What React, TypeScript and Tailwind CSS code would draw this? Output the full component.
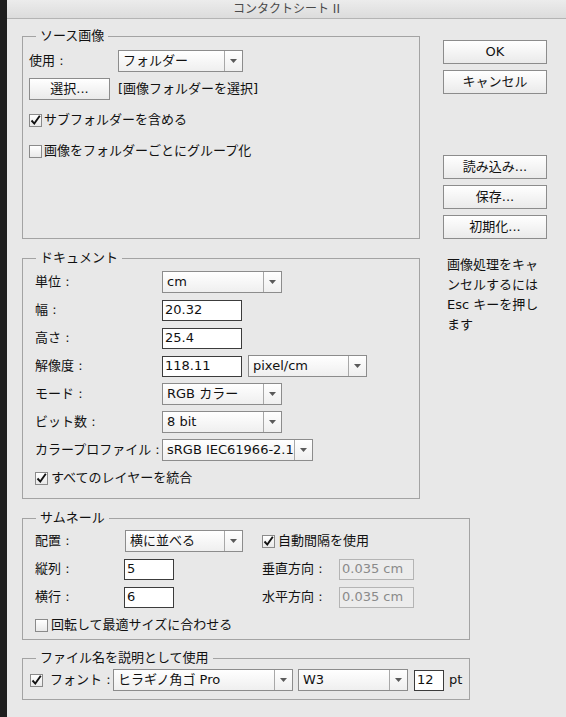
import type { ReactNode } from 'react';

const FONT = '"DejaVu Sans", "Noto Sans CJK JP", sans-serif';

function Arrow() {
  return (
    <svg width="7" height="4" viewBox="0 0 7 4" className="block">
      <path d="M0 0 L7 0 L3.5 4 Z" fill="#5a5a5a" />
    </svg>
  );
}

function Select({ w, text }: { w: string; text: string }) {
  return (
    <div className={`${w} h-[22px] flex border border-[#8c8c8c] bg-gradient-to-b from-white to-[#efefef] shrink-0`}>
      <div className="flex-1 flex items-center pl-[4px] overflow-hidden whitespace-nowrap text-[13px] text-[#111]">{text}</div>
      <div className="w-[18px] border-l border-[#a8a8a8] flex items-center justify-center">
        <Arrow />
      </div>
    </div>
  );
}

function Field({ w, text, disabled }: { w: string; text: string; disabled?: boolean }) {
  return (
    <div
      className={`${w} h-[21px] flex items-center pl-[2px] text-[13px] shrink-0 border ${
        disabled ? 'border-[#b4b4b4] bg-[#ececec] text-[#8a8a8a]' : 'border-[#3c3c3c] bg-white text-[#111]'
      }`}
    >
      {text}
    </div>
  );
}

function Btn({ w = 'w-[104px]', h = 'h-[24px]', children }: { w?: string; h?: string; children: ReactNode }) {
  return (
    <div className={`${w} ${h} flex items-center justify-center border border-[#8c8c8c] bg-gradient-to-b from-white to-[#eaeaea] text-[13px] text-[#111] shrink-0`}>
      {children}
    </div>
  );
}

function Box({ checked }: { checked?: boolean }) {
  return (
    <div className="w-[13px] h-[13px] border border-[#8a8a8a] bg-gradient-to-b from-white to-[#e9e9e9] flex items-center justify-center shrink-0">
      {checked && (
        <svg width="11" height="11" viewBox="0 0 11 11" className="block">
          <path d="M1.5 5.5 L4.3 8.6 L9.8 0.8" fill="none" stroke="#111" strokeWidth="1.9" />
        </svg>
      )}
    </div>
  );
}

function Check({ checked, label, gap = 'gap-[2px]' }: { checked?: boolean; label: string; gap?: string }) {
  return (
    <div className={`flex items-center ${gap} h-[16px] text-[13px] text-[#111] whitespace-nowrap`}>
      <Box checked={checked} />
      <span>{label}</span>
    </div>
  );
}

function Group({ title, cls, children }: { title: string; cls: string; children: ReactNode }) {
  return (
    <fieldset className={`${cls} border border-[#a3a3a3] box-border`}>
      <legend className="ml-[13px] px-[4px] text-[13px] leading-[18px] text-[#111]">{title}</legend>
      {children}
    </fieldset>
  );
}

function Row({ label, lw, children, mt = 'mt-[6px]' }: { label: string; lw: string; children?: ReactNode; mt?: string }) {
  return (
    <div className={`flex items-center h-[22px] ${mt}`}>
      <div className={`${lw} shrink-0 text-[13px] text-[#111] whitespace-nowrap`}>{label}</div>
      {children}
    </div>
  );
}

export default function App() {
  return (
    <div className="w-[566px] h-[717px] flex bg-[#1e1e1e] overflow-hidden" style={{ fontFamily: FONT }}>
      <div className="w-[7px] shrink-0" />
      <div className="flex-1 flex flex-col bg-[#e8e8e8]">
        {/* Title bar */}
        <div className="h-[19px] shrink-0 flex items-center justify-center bg-gradient-to-b from-[#ececec] to-[#dcdcdc] border-b border-[#b4b4b4] text-[12px] text-[#4a4a4a]">
          コンタクトシート II
        </div>

        <div className="pl-[15px] pt-[8px]">
          <div className="flex">
            <div className="w-[398px] flex flex-col">
              {/* Source */}
              <Group title="ソース画像" cls="h-[212px]">
                <div className="pl-[6px]">
                  <Row label="使用 :" lw="w-[89px]" mt="mt-[5px]">
                    <Select w="w-[125px]" text="フォルダー" />
                  </Row>
                  <div className="flex items-center mt-[6px]">
                    <Btn w="w-[81px]" h="h-[22px]">選択...</Btn>
                    <span className="ml-[8px] text-[13px] text-[#111]">[画像フォルダーを選択]</span>
                  </div>
                  <div className="mt-[12px]">
                    <Check checked label="サブフォルダーを含める" />
                  </div>
                  <div className="mt-[15px]">
                    <Check label="画像をフォルダーごとにグループ化" />
                  </div>
                </div>
              </Group>

              {/* Document */}
              <Group title="ドキュメント" cls="h-[250px] mt-[10px]">
                <div className="pl-[12px]">
                  <Row label="単位 :" lw="w-[127px]" mt="mt-[4px]">
                    <Select w="w-[120px]" text="cm" />
                  </Row>
                  <Row label="幅 :" lw="w-[127px]">
                    <Field w="w-[80px]" text="20.32" />
                  </Row>
                  <Row label="高さ :" lw="w-[127px]">
                    <Field w="w-[80px]" text="25.4" />
                  </Row>
                  <Row label="解像度 :" lw="w-[127px]">
                    <Field w="w-[80px]" text="118.11" />
                    <div className="ml-[6px]">
                      <Select w="w-[119px]" text="pixel/cm" />
                    </div>
                  </Row>
                  <Row label="モード :" lw="w-[127px]">
                    <Select w="w-[120px]" text="RGB カラー" />
                  </Row>
                  <Row label="ビット数 :" lw="w-[127px]">
                    <Select w="w-[120px]" text="8 bit" />
                  </Row>
                  <Row label="カラープロファイル :" lw="w-[127px]">
                    <Select w="w-[151px]" text="sRGB IEC61966-2.1" />
                  </Row>
                  <div className="flex items-center h-[22px] mt-[6px]">
                    <Check checked label="すべてのレイヤーを統合" gap="gap-[3px]" />
                  </div>
                </div>
              </Group>
            </div>

            {/* Right column */}
            <div className="ml-[23px] mt-[13px] flex flex-col">
              <Btn>OK</Btn>
              <div className="mt-[6px]"><Btn>キャンセル</Btn></div>
              <div className="mt-[61px]"><Btn>読み込み...</Btn></div>
              <div className="mt-[6px]"><Btn>保存...</Btn></div>
              <div className="mt-[6px]"><Btn>初期化...</Btn></div>
              <div className="mt-[16px] ml-[4px] w-[100px] whitespace-nowrap text-[13px] leading-[20px] text-[#111]">
                画像処理をキャ
                <br />
                ンセルするには
                <br />
                Esc キーを押し
                <br />
                ます
              </div>
            </div>
          </div>

          {/* Thumbnails */}
          <Group title="サムネール" cls="w-[448px] h-[131px] mt-[10px]">
            <div className="pl-[12px]">
              <div className="flex items-center h-[22px] mt-[3px]">
                <div className="w-[227px] flex items-center">
                  <div className="w-[90px] text-[13px] text-[#111]">配置 :</div>
                  <Select w="w-[118px]" text="横に並べる" />
                </div>
                <Check checked label="自動間隔を使用" gap="gap-[3px]" />
              </div>
              <div className="flex items-center h-[22px] mt-[6px]">
                <div className="w-[227px] flex items-center">
                  <div className="w-[89px] text-[13px] text-[#111]">縦列 :</div>
                  <Field w="w-[50px]" text="5" />
                </div>
                <div className="w-[77px] text-[13px] text-[#111]">垂直方向 :</div>
                <Field w="w-[75px]" text="0.035 cm" disabled />
              </div>
              <div className="flex items-center h-[22px] mt-[6px]">
                <div className="w-[227px] flex items-center">
                  <div className="w-[89px] text-[13px] text-[#111]">横行 :</div>
                  <Field w="w-[50px]" text="6" />
                </div>
                <div className="w-[77px] text-[13px] text-[#111]">水平方向 :</div>
                <Field w="w-[75px]" text="0.035 cm" disabled />
              </div>
              <div className="flex items-center h-[22px] mt-[6px]">
                <Check label="回転して最適サイズに合わせる" gap="gap-[3px]" />
              </div>
            </div>
          </Group>

          {/* File name */}
          <Group title="ファイル名を説明として使用" cls="w-[448px] h-[51px] mt-[9px]">
            <div className="pl-[7px] flex items-center h-[22px] mt-[2px]">
              <Box checked />
              <span className="ml-[7px] w-[63px] text-[13px] text-[#111] whitespace-nowrap">フォント :</span>
              <Select w="w-[180px]" text="ヒラギノ角ゴ Pro" />
              <div className="ml-[5px]"><Select w="w-[110px]" text="W3" /></div>
              <div className="ml-[6px]"><Field w="w-[30px]" text="12" /></div>
              <span className="ml-[5px] text-[13px] text-[#111]">pt</span>
            </div>
          </Group>
        </div>
      </div>
    </div>
  );
}
